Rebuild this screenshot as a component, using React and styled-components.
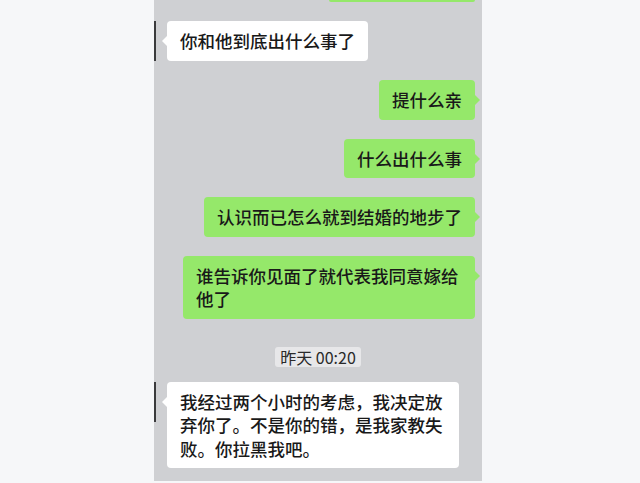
import React from "react";
import styled, { createGlobalStyle, css } from "styled-components";

const Global = createGlobalStyle`
  html, body { margin: 0; padding: 0; background: #f6f7f9; }
  body { font-family: "Noto Sans CJK SC", "Noto Sans", sans-serif; }
`;

const Page = styled.div`
  width: 640px;
  height: 483px;
  display: flex;
  align-items: flex-start;
  padding-left: 154px;
  box-sizing: border-box;
  overflow: hidden;
`;

const Panel = styled.div`
  width: 328px;
  height: 481px;
  background: #cfd0d3;
  overflow: hidden;
`;

const Stack = styled.div`
  display: flex;
  flex-direction: column;
  gap: 19px;
`;

const Row = styled.div`
  display: flex;
  align-items: flex-start;
  justify-content: ${(p) => (p.$me ? "flex-end" : "flex-start")};
  padding-right: ${(p) => (p.$me ? "7px" : "0")};
`;

/* bottom edge of an earlier green bubble, scrolled out of view */
const ScrolledEdge = styled.div`
  width: 146px;
  height: 2px;
  background: #95e86a;
  border-radius: 0 0 4px 4px;
`;

const AvatarEdge = styled.div`
  width: 2px;
  height: 40px;
  background: #3a3a3c;
  flex: none;
`;

const Bubble = styled.div`
  position: relative;
  max-width: 266px;
  padding: 8px 13px;
  border-radius: 4px;
  font-size: 17.5px;
  line-height: 23.5px;
  color: #191919;
  font-weight: 500;
  ${(p) =>
    p.$me
      ? css`
          background: #95e86a;
          &::after {
            content: "";
            position: absolute;
            right: -5px;
            top: 15px;
            border-style: solid;
            border-width: 5px 0 5px 5px;
            border-color: transparent transparent transparent #95e86a;
          }
        `
      : css`
          background: #ffffff;
          margin-left: 11px;
          &::before {
            content: "";
            position: absolute;
            left: -5px;
            top: 15px;
            border-style: solid;
            border-width: 5px 5px 5px 0;
            border-color: transparent #ffffff transparent transparent;
          }
        `}
`;

const TimeRow = styled.div`
  display: flex;
  justify-content: center;
  margin: 9px 0 -4px;
`;

const Time = styled.span`
  background: #e7e7e9;
  color: #2a2a2a;
  font-size: 16px;
  line-height: 20px;
  padding: 0 5px;
  border-radius: 3px;
`;

const messages = [
  { me: false, text: "你和他到底出什么事了" },
  { me: true, text: "提什么亲" },
  { me: true, text: "什么出什么事" },
  { me: true, text: "认识而已怎么就到结婚的地步了" },
  { me: true, text: "谁告诉你见面了就代表我同意嫁给他了" },
  { time: "昨天 00:20" },
  { me: false, text: "我经过两个小时的考虑，我决定放弃你了。不是你的错，是我家教失败。你拉黑我吧。" },
];

export default function App() {
  return (
    <>
      <Global />
      <Page>
        <Panel>
          <Stack>
            <Row $me>
              <ScrolledEdge />
            </Row>
            {messages.map((m, i) =>
              m.time ? (
                <TimeRow key={i}>
                  <Time>{m.time}</Time>
                </TimeRow>
              ) : (
                <Row key={i} $me={m.me}>
                  {!m.me && <AvatarEdge />}
                  <Bubble $me={m.me}>{m.text}</Bubble>
                </Row>
              )
            )}
          </Stack>
        </Panel>
      </Page>
    </>
  );
}
